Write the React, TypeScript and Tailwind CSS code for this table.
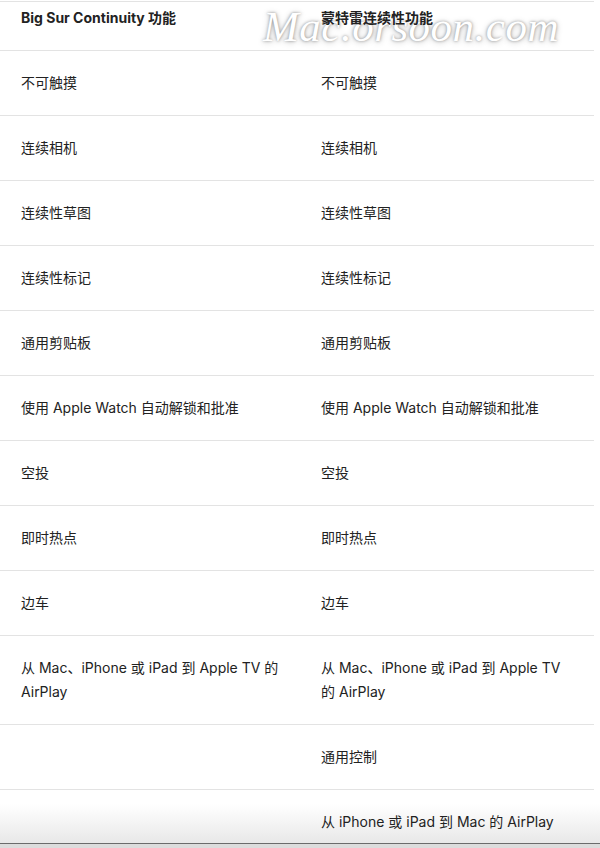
const rows: [string, string][] = [
  ["不可触摸", "不可触摸"],
  ["连续相机", "连续相机"],
  ["连续性草图", "连续性草图"],
  ["连续性标记", "连续性标记"],
  ["通用剪贴板", "通用剪贴板"],
  ["使用 Apple Watch 自动解锁和批准", "使用 Apple Watch 自动解锁和批准"],
  ["空投", "空投"],
  ["即时热点", "即时热点"],
  ["边车", "边车"],
  ["从 Mac、iPhone 或 iPad 到 Apple TV 的 AirPlay", "从 Mac、iPhone 或 iPad 到 Apple TV\n的 AirPlay"],
  ["", "通用控制"],
  ["", "从 iPhone 或 iPad 到 Mac 的 AirPlay"],
];

export default function App() {
  return (
    <div
      className="relative h-[848px] w-[600px] overflow-hidden bg-white pt-px text-[14px] leading-6 text-[#222]"
      style={{ fontFamily: 'Inter, "Noto Sans CJK SC", sans-serif' }}
    >
      {/* watermark, behind the table text */}
      <div
        className="absolute left-[263px] top-[2px] text-[43px] leading-[50px] italic tracking-[0.5px] text-white [text-shadow:0_0_3px_rgba(0,0,0,0.4),0_1px_6px_rgba(0,0,0,0.25)]"
        style={{ fontFamily: '"Liberation Serif", serif' }}
      >
        Mac.orsoon.com
      </div>

      {/* bottom shade */}
      <div className="absolute inset-x-0 bottom-0 flex h-[44px] flex-col">
        <div className="flex-1 bg-gradient-to-b from-transparent to-[#e8e8e8]" />
        <div className="h-px bg-[#6b6b6b]" />
        <div className="h-[4px] bg-[#dcdcdc]" />
      </div>

      <div className="relative z-10 w-[594px] border-t border-[#e3e3e3]">
        <div className="grid grid-cols-[300px_294px] border-b border-[#e3e3e3] pt-1 pb-5 font-bold">
          <div className="pl-[21px]">Big Sur Continuity 功能</div>
          <div className="pl-[21px]">蒙特雷连续性功能</div>
        </div>
        {rows.map(([left, right], i) => (
          <div key={i} className="grid grid-cols-[300px_294px] border-b border-[#e3e3e3] py-5">
            <div className="min-h-6 pl-[21px] pr-2">{left}</div>
            <div className="min-h-6 whitespace-pre-line pl-[21px] pr-2">{right}</div>
          </div>
        ))}
      </div>
    </div>
  );
}
